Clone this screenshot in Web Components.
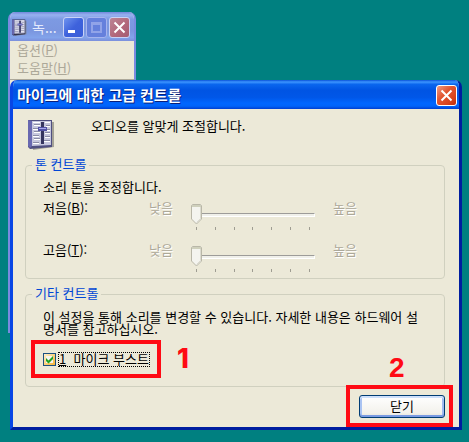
<!DOCTYPE html>
<html lang="ko">
<head>
<meta charset="utf-8">
<title>마이크에 대한 고급 컨트롤</title>
<style>
  html, body {
    height: 100%;
  }

  body {
    margin: 0;
    overflow: hidden;
    background: #008080;
    font: 13px/16px "Noto Sans CJK KR", sans-serif;
    color: #000;
  }
</style>
</head>
<body>
<sound-desktop></sound-desktop>
<script>
const define = (name, html, setup) => {
  const template = document.createElement("template");
  template.innerHTML = html;

  window.customElements.define(name, class extends HTMLElement {
    constructor() {
      super();
      this.attachShadow({ mode: "open" });
      this.shadowRoot.appendChild(template.content.cloneNode(true));
    }

    connectedCallback() {
      if (setup) setup(this, this.shadowRoot);
    }
  });
};

define("mixer-icon", `
<style>
  :host { display: block; flex: none; width: 27px; height: 31px; }
  :host([small]) { width: 15px; height: 17px; }
  svg { display: block; width: 100%; height: 100%; }
  :host([small]) .cover { fill: #33334f; }
</style>
<svg viewBox="0 0 27 31" aria-hidden="true">
  <path d="M3 3H26V28L5 31Z" fill="#77756c" opacity=".6"/>
  <path class="cover" d="M0 1H24V28L2 30L0 28Z" fill="#4f4f80"/>
  <path d="M4 2H23V26L4 27Z" fill="#c6c7de"/>
  <path d="M0 1L4 2V27L2 29L0 27Z" fill="#6868b0"/>
  <path d="M5 3H12V4H5ZM6 6H12V7H6ZM5 10H11V11H5ZM6 13H12V14H6ZM5 17H11V18H5ZM6 20H12V21H6ZM5 24H11V25H5ZM17 3H22V4H17ZM18 7H22V8H18ZM18 11H22V12H18ZM17 14H22V15H17ZM17 18H22V19H17ZM16 22H22V23H16Z" fill="#fff"/>
  <path d="M6 5H12V6H6ZM5 9H11V10H5ZM6 12H12V13H6ZM5 16H11V17H5ZM6 19H12V20H6ZM5 23H11V24H5ZM18 6H22V7H18ZM18 10H22V11H18ZM17 13H22V14H17ZM17 17H22V18H17ZM16 21H22V22H16Z" fill="#8a8ba6"/>
  <path d="M13 3H16V25H13Z" fill="#35355f"/>
  <path d="M10 8H19V12H10Z" fill="#5252a6"/>
  <path d="M11 9H18V10H11Z" fill="#a9a9ee"/>
</svg>
`);

define("caption-button", `
<style>
  :host { display: block; flex: none; width: 21px; height: 21px; }
  button {
    display: block;
    box-sizing: border-box;
    width: 100%;
    height: 100%;
    padding: 0;
    border: 1px solid #fff;
    border-radius: 3px;
    background: linear-gradient(135deg, #ef9b82, #e25733 40%, #d8421c 75%, #bd2c0d);
  }
  :host([dim]) button {
    border-color: #c9d2f5;
    background: linear-gradient(135deg, #bc8595, #b2677a 60%, #a35c72);
  }
  :host([kind="min"]) button { background: linear-gradient(135deg, #6f94ef, #3e62dc 50%, #3a5ed8); }
  :host([kind="max"]) button { border-color: #a6b4ee; background: #6580dc; }
  svg { display: block; width: 19px; height: 19px; }
  path { display: none; fill: none; stroke: #fff; stroke-width: 2; }
  :host([kind="min"]) .min,
  :host([kind="max"]) .max,
  :host([kind="close"]) .close { display: inline; }
  .min { stroke-width: 3; }
  .max { stroke: #91a3e8; }
</style>
<button type="button">
  <svg viewBox="0 0 19 19" aria-hidden="true">
    <path class="min" d="M4 13.500H11"/>
    <path class="max" d="M5 5H14M5 4V14H14V4M5 6H14"/>
    <path class="close" d="M4.500 4.500L14.500 14.500M14.500 4.500L4.500 14.500"/>
  </svg>
</button>
`, (host, root) => {
  root.querySelector("button").setAttribute("aria-label", host.getAttribute("label"));
});

define("xp-window", `
<style>
  :host {
    display: flex;
    flex-direction: column;
    box-sizing: border-box;
    overflow: hidden;
    border-radius: 7px 7px 0 0;
    border: solid;
    border-width: 0 3px 3px;
    border-color: #0846e5 #001ea0 #001ea0 #0846e5;
    background: #ece9d8;
  }
  header {
    display: flex;
    align-items: center;
    gap: 2px;
    height: 29px;
    margin: 0 -3px;
    padding: 2px 5px 0 7px;
    box-sizing: border-box;
    background: linear-gradient(#0a52d8, #3d95ff 7%, #0a66ee 15%, #0054e3 35%, #0057e8 60%, #0066ff 80%, #0064fa 90%, #003fd0);
  }
  h1 {
    flex: 1;
    min-width: 0;
    margin: 0;
    font-size: 15px;
    line-height: 20px;
    padding-bottom: 2px;
    font-weight: 700;
    color: #fff;
    text-shadow: 1px 1px #0a1f7a;
    white-space: nowrap;
  }
  :host([inactive]) { border-color: #7a8ae0; border-width: 0 2px 2px; }
  :host([inactive]) header {
    padding: 2px 6px 0 4px;
    margin: 0 -2px;
    background: linear-gradient(#7288dc, #97b1f0 10%, #7d9ae2 25%, #7b96df 65%, #82a3ea 88%, #7b8fdc);
  }
  :host([inactive]) h1 { font-size: 14px; font-weight: 400; color: #e4eafc; text-shadow: none; margin-left: 3px; }
</style>
<header>
  <slot name="icon"></slot>
  <h1></h1>
  <slot name="buttons"></slot>
</header>
<slot></slot>
`, (host, root) => {
  root.querySelector("h1").textContent = host.getAttribute("caption");
});

define("group-box", `
<style>
  :host { display: block; }
  fieldset {
    margin: 0;
    min-width: 0;
    padding: 0 17px;
    border: 1px solid #d0d0bf;
    border-radius: 4px;
  }
  legend { margin-left: -11px; padding: 0 3px 2px; line-height: 14px; color: #0046d5; }
</style>
<fieldset>
  <legend></legend>
  <slot></slot>
</fieldset>
`, (host, root) => {
  root.querySelector("legend").textContent = host.getAttribute("legend");
});

define("tone-slider", `
<style>
  :host {
    display: grid;
    grid-template-columns: 106px 42px 124px auto;
    align-items: start;
    line-height: 18px;
  }
  .end { color: #aca899; text-shadow: 1px 1px #fff; }
  .high { margin-left: 18px; }
  .slider { display: grid; margin-top: 5px; row-gap: 2px; }
  input, svg { grid-area: 1 / 1; }
  input {
    appearance: none;
    width: 100%;
    height: 21px;
    margin: 0;
    background: none;
  }
  input::-webkit-slider-runnable-track {
    height: 4px;
    box-sizing: border-box;
    border: solid;
    border-width: 1px 1px 1px 0;
    border-color: #9d9c99 #fff #fff;
    background: #f0f0ea;
  }
  input::-webkit-slider-thumb {
    appearance: none;
    width: 11px;
    height: 4px;
    opacity: 0;
  }
  svg { width: 11px; height: 21px; z-index: 1; }
  .ticks {
    display: flex;
    justify-content: space-between;
    margin: 0 5px;
  }
  .ticks i { width: 1px; height: 3px; background: #9f9d92; }
</style>
<label for="range"></label>
<span class="end">낮음</span>
<div class="slider">
  <input id="range" type="range" min="0" max="6" value="0" disabled>
  <svg viewBox="0 0 11 21" aria-hidden="true">
    <path d="M1.500 .5H9.500L10.500 1.500V15L5.500 20L.5 15V1.500Z" fill="#f4f4ef" stroke="#b9b7a8"/>
    <path d="M1 1H10V3H1Z" fill="#cfd0bc"/>
    <path d="M9.500 3V14.500L5.500 18.500" fill="none" stroke="#dcdbd0"/>
  </svg>
  <div class="ticks"><i></i><i></i><i></i><i></i><i></i><i></i><i></i></div>
</div>
<span class="end high">높음</span>
`, (host, root) => {
  root.querySelector("label").innerHTML =
    `${host.getAttribute("name")}(<u>${host.getAttribute("key")}</u>):`;
});

define("boost-check", `
<style>
  :host { display: flex; align-items: center; gap: 2px; }
  input {
    appearance: none;
    display: block;
    width: 13px;
    height: 13px;
    margin: 0;
    box-sizing: border-box;
    border: 1px solid #1c5180;
    background: linear-gradient(135deg, #fff0cf, #f8b330);
  }
  .box { display: grid; }
  .box > * { grid-area: 1 / 1; }
  svg { width: 13px; height: 13px; pointer-events: none; }
  label {
    box-sizing: border-box;
    height: 15px;
    line-height: 12px;
    border: 1px dotted #000;
    white-space: pre;
  }
</style>
<span class="box">
  <input id="boost" type="checkbox" checked>
  <svg viewBox="0 0 13 13" aria-hidden="true">
    <path d="M3 3H10V10H3Z" fill="#f6f6f0"/>
    <path d="M3 5V8L5.500 10.500L10 6V3L5.500 7.500Z" fill="#21a121"/>
  </svg>
</span>
<label for="boost"><u>1</u>  마이크 부스트</label>
`);

define("xp-button", `
<style>
  :host { display: block; }
  button {
    display: block;
    width: 86px;
    height: 23px;
    padding: 0 0 2px;
    font: inherit;
    color: #000;
    border: 1px solid #003c74;
    border-radius: 3px;
    background: linear-gradient(#fff, #f3f2ec 80%, #e6e3da);
    box-shadow: inset 0 2px #cee0fb, inset 0 -2px #7a9be2, inset 2px 0 #a9c3f2, inset -2px 0 #a0baf0;
  }
</style>
<button type="button"><slot></slot></button>
`);

/* Red outline and step number laid over the slotted control */
define("step-mark", `
<style>
  :host { display: block; position: relative; width: fit-content; }
  .frame {
    position: absolute;
    inset: -12px -11px -11px -12px;
    border: 4px solid #ff0a14;
    pointer-events: none;
  }
  b {
    position: absolute;
    left: calc(100% + 27px);
    top: -7px;
    font: 800 27px/28px Inter, sans-serif;
    color: #ff0a14;
  }
  :host([above]) .frame { inset: -10px -8px -9px -13px; }
  :host([above]) b { left: 30px; top: -41px; font: 700 28px/28px "Liberation Sans", sans-serif; }
</style>
<slot></slot>
<span class="frame"></span>
<b></b>
`, (host, root) => {
  root.querySelector("b").textContent = host.getAttribute("step");
});

define("sound-desktop", `
<style>
  :host { display: block; position: relative; height: 100%; }
  .recorder { position: absolute; left: 8px; top: 12px; width: 128px; height: 321px; }
  .dialog { position: absolute; left: 10px; right: 7px; top: 80px; }
  nav {
    display: flex;
    flex-direction: column;
    padding-left: 7px;
    line-height: 18px;
    padding-bottom: 2px;
    color: #aca899;
    border-bottom: 1px solid #aca899;
  }
  .client { padding: 10px 14px 9px 12px; }
  .intro { display: flex; gap: 36px; padding-left: 3px; margin-bottom: 7px; line-height: 14px; }
  p { margin: 0; }
  .tone { padding: 6px 0 5px; }
  .tone p { margin-bottom: 4px; }
  .tone tone-slider { height: 32px; }
  .tone tone-slider + tone-slider { margin-top: 10px; }
  .other { padding: 9px 0 19px; }
  .other p { margin-bottom: 17px; line-height: 12px; }
  group-box + group-box { margin-top: 7px; }
  footer { display: flex; justify-content: flex-end; margin-top: 8px; }
</style>
<xp-window class="recorder" caption="녹..." inactive>
  <mixer-icon slot="icon" small></mixer-icon>
  <caption-button slot="buttons" kind="min" label="최소화" dim></caption-button>
  <caption-button slot="buttons" kind="max" label="최대화" dim></caption-button>
  <caption-button slot="buttons" kind="close" label="닫기" dim></caption-button>
  <nav>
    <span>옵션(<u>P</u>)</span>
    <span>도움말(<u>H</u>)</span>
  </nav>
</xp-window>
<xp-window class="dialog" caption="마이크에 대한 고급 컨트롤">
  <caption-button slot="buttons" kind="close" label="닫기"></caption-button>
  <div class="client">
    <div class="intro">
      <mixer-icon></mixer-icon>
      <p>오디오를 알맞게 조절합니다.</p>
    </div>
    <group-box legend="톤 컨트롤">
      <div class="tone">
        <p>소리 톤을 조정합니다.</p>
        <tone-slider name="저음" key="B"></tone-slider>
        <tone-slider name="고음" key="T"></tone-slider>
      </div>
    </group-box>
    <group-box legend="기타 컨트롤">
      <div class="other">
        <p>이 설정을 통해 소리를 변경할 수 있습니다. 자세한 내용은 하드웨어 설명서를 참고하십시오.</p>
        <step-mark step="1"><boost-check></boost-check></step-mark>
      </div>
    </group-box>
    <footer>
      <step-mark step="2" above><xp-button>닫기</xp-button></step-mark>
    </footer>
  </div>
</xp-window>
`);
</script>
</body>
</html>
